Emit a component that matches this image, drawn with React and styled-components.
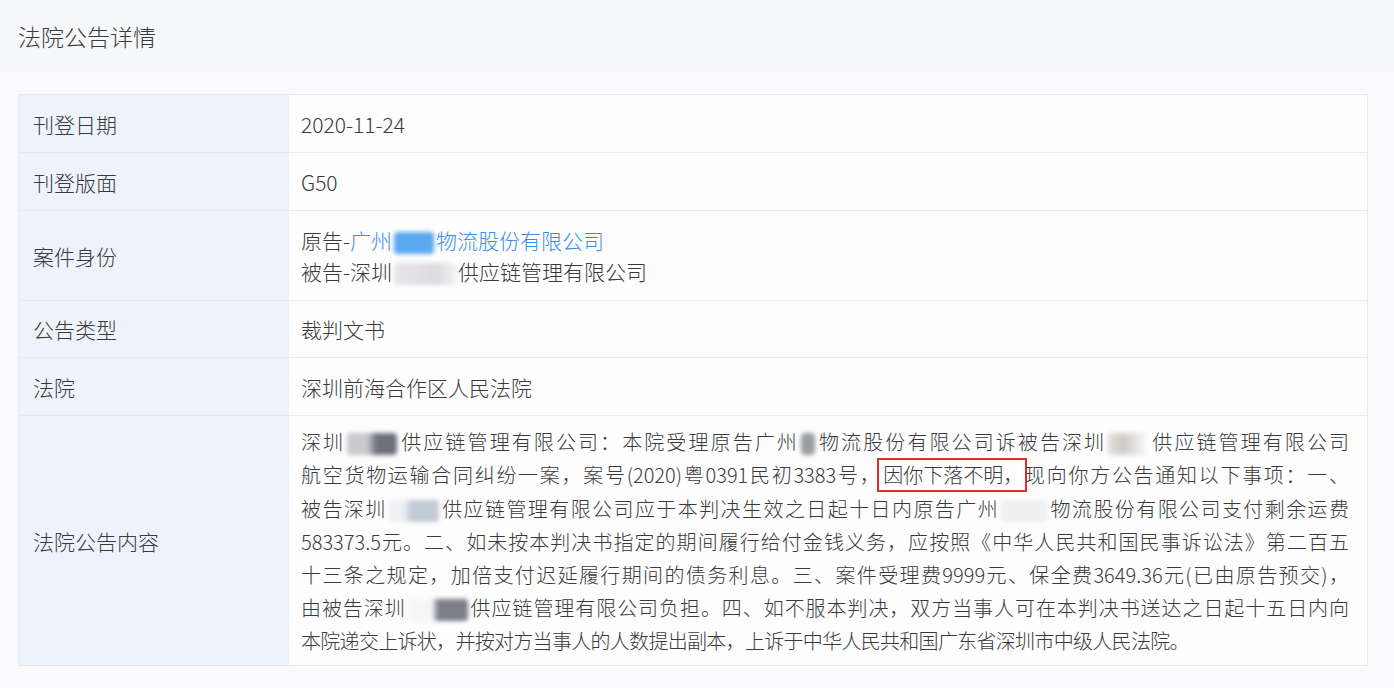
import styled, { createGlobalStyle } from "styled-components";

const GlobalStyle = createGlobalStyle`
  html, body {
    margin: 0;
    padding: 0;
    background: #fbfbfd;
  }
  body {
    font-family: "Noto Sans CJK SC", "Noto Sans", sans-serif;
    font-weight: 300;
    color: #3a3a3a;
  }
`;

const Page = styled.div`
  width: 1394px;
  height: 688px;
  overflow: hidden;
  background: #fbfbfd;
`;

const Header = styled.div`
  height: 72px;
  display: flex;
  align-items: center;
  padding-left: 18px;
  background: #f6f7f9;
  font-size: 23px;
`;

const Body = styled.div`
  padding: 22px 26px 0 18px;
`;

const Table = styled.div`
  display: grid;
  grid-template-columns: 270px 1fr;
  border: 1px solid #e7e9ef;
  border-bottom: none;
`;

const Label = styled.div`
  background: #edf2fb;
  border-bottom: 1px solid #e4e8f0;
  display: flex;
  align-items: center;
  padding-left: 14px;
  font-size: 21px;
  height: ${(p) => p.$h}px;
  box-sizing: border-box;
`;

const Value = styled.div`
  background: #fdfdfe;
  border-bottom: 1px solid #e7e9ef;
  display: flex;
  flex-direction: column;
  justify-content: center;
  padding: 0 18px 0 12px;
  font-size: 21px;
  height: ${(p) => p.$h}px;
  box-sizing: border-box;
`;

const Pair = styled.div`
  line-height: 31px;
`;

const Link = styled.span`
  color: #3a8ee6;
`;

const Blur = styled.span`
  display: inline-block;
  vertical-align: middle;
  width: ${(p) => p.$w}px;
  height: 22px;
  margin: 0 ${(p) => p.$m || 2}px;
  border-radius: 4px;
  background: ${(p) => p.$bg};
  filter: blur(2px);
`;

const Content = styled.div`
  font-size: 20px;
  line-height: 33px;
  padding: 10px 0;
`;

const Line = styled.div`
  text-align: justify;
  text-align-last: ${(p) => (p.$last ? "left" : "justify")};
  white-space: nowrap;
  letter-spacing: ${(p) => (p.$last ? "-0.7px" : "0")};
`;

const Marked = styled.span`
  display: inline-block;
  border: 2px solid #d8302a;
  padding: 0 2px 0 4px;
  line-height: 30px;
  margin: 0 -4px;
`;

const rows = [
  { label: "刊登日期", h: 58, value: "2020-11-24" },
  { label: "刊登版面", h: 58, value: "G50" },
];

function App() {
  return (
    <Page>
      <GlobalStyle />
      <Header>法院公告详情</Header>
      <Body>
        <Table>
          {rows.map((r) => (
            <>
              <Label key={r.label + "l"} $h={r.h}>{r.label}</Label>
              <Value key={r.label + "v"} $h={r.h}>{r.value}</Value>
            </>
          ))}
          <Label $h={90}>案件身份</Label>
          <Value $h={90}>
            <Pair>
              原告-<Link>广州<Blur $w={40} $m={0} $bg="#5aa8ef" />物流股份有限公司</Link>
            </Pair>
            <Pair>
              被告-深圳<Blur $w={62} $m={0} $bg="linear-gradient(90deg,#e6e6ea,#dcdce0 70%,#f2f2f4)" />供应链管理有限公司
            </Pair>
          </Value>
          <Label $h={57}>公告类型</Label>
          <Value $h={57}>裁判文书</Value>
          <Label $h={58}>法院</Label>
          <Value $h={58}>深圳前海合作区人民法院</Value>
          <Label $h={250}>法院公告内容</Label>
          <Value $h={250}>
            <Content>
              <Line>
                深圳<Blur $w={50} $bg="linear-gradient(90deg,#c9c9ce 40%,#6e717a 60%)" />供应链管理有限公司：本院受理原告广州<Blur $w={14} $bg="#9a9ca2" />物流股份有限公司诉被告深圳<Blur $w={40} $bg="linear-gradient(90deg,#e2dfdc,#cfcbc7 40%,#fdfdfe)" />供应链管理有限公司
              </Line>
              <Line>
                航空货物运输合同纠纷一案，案号(2020)粤0391民初3383号，<Marked>因你下落不明，</Marked>现向你方公告通知以下事项：一、
              </Line>
              <Line>
                被告深圳<Blur $w={50} $bg="linear-gradient(90deg,#eef0f3 30%,#c3cbd6 45%)" />供应链管理有限公司应于本判决生效之日起十日内原告广州<Blur $w={46} $bg="#eeeff1" />物流股份有限公司支付剩余运费
              </Line>
              <Line>
                583373.5元。二、如未按本判决书指定的期间履行给付金钱义务，应按照《中华人民共和国民事诉讼法》第二百五
              </Line>
              <Line>
                十三条之规定，加倍支付迟延履行期间的债务利息。三、案件受理费9999元、保全费3649.36元(已由原告预交)，
              </Line>
              <Line>
                由被告深圳<Blur $w={60} $bg="linear-gradient(90deg,#f6f6f8 40%,#7c7f88 50%)" />供应链管理有限公司负担。四、如不服本判决，双方当事人可在本判决书送达之日起十五日内向
              </Line>
              <Line $last>
                本院递交上诉状，并按对方当事人的人数提出副本，上诉于中华人民共和国广东省深圳市中级人民法院。
              </Line>
            </Content>
          </Value>
        </Table>
      </Body>
    </Page>
  );
}

export default App;
